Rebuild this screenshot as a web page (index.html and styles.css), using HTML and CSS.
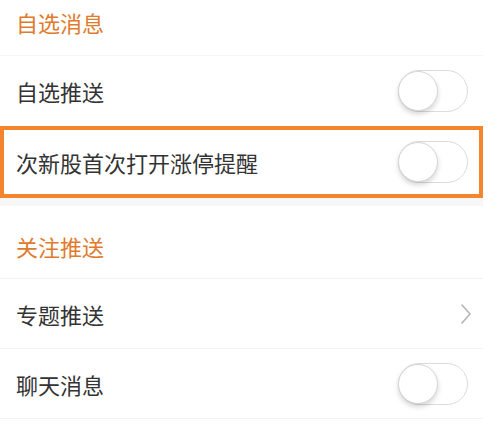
FILE: index.html
```html
<!DOCTYPE html>
<html lang="zh-CN">
<head>
<meta charset="utf-8">
<link rel="stylesheet" href="styles.css">
</head>
<body>
<div class="page">
  <div class="sec-head sec-head-first">自选消息</div>
  <div class="row">
    <span class="label">自选推送</span>
    <span class="toggle"><span class="knob"></span></span>
  </div>
  <div class="row row-boxed">
    <span class="label">次新股首次打开涨停提醒</span>
    <span class="toggle"><span class="knob"></span></span>
  </div>
  <div class="gap"></div>
  <div class="sec-head sec-head-second">关注推送</div>
  <div class="row row-line">
    <span class="label">专题推送</span>
    <svg class="chev" width="12" height="22" viewBox="0 0 12 22"><path d="M2 2 L10 11 L2 20" fill="none" stroke="#b4b4b4" stroke-width="1.6" stroke-linecap="round" stroke-linejoin="round"/></svg>
  </div>
  <div class="row row-line row-last">
    <span class="label">聊天消息</span>
    <span class="toggle"><span class="knob"></span></span>
  </div>
</div>
</body>
</html>
```

FILE: styles.css
```css
html, body {
  margin: 0;
  padding: 0;
  background: #ffffff;
}
body {
  font-family: "Noto Sans CJK SC", "Noto Sans", sans-serif;
  color: #333333;
}
.page {
  width: 483px;
  display: flex;
  flex-direction: column;
}
.sec-head {
  font-size: 22px;
  line-height: 22px;
  color: #e07a2c;
  padding-left: 16px;
  box-sizing: border-box;
  background: #ffffff;
}
.sec-head-first {
  height: 56px;
  padding-top: 11px;
  border-bottom: 1px solid #f5f5f5;
}
.sec-head-second {
  height: 73px;
  padding-top: 29px;
  border-bottom: 1px solid #f2f2f2;
}
.row {
  display: flex;
  align-items: center;
  justify-content: space-between;
  height: 70px;
  padding: 0 15px 0 16px;
  box-sizing: border-box;
  background: #ffffff;
}
.row-boxed {
  height: 72px;
  border: 4px solid #f5852d;
  padding: 0 11px 0 12px;
}
.row-line {
  height: 70px;
  border-bottom: 1px solid #f3f3f3;
}
.row-line .chev {
  margin-right: -4px;
}
.label {
  font-size: 22px;
  line-height: 22px;
  color: #333333;
}
.gap {
  height: 8px;
  background: #f7f7f7;
}
.toggle {
  width: 70px;
  height: 42px;
  box-sizing: border-box;
  border: 1.5px solid #dcdcdc;
  border-radius: 21px;
  background: #ffffff;
  display: flex;
  align-items: center;
}
.knob {
  width: 40px;
  height: 40px;
  margin-left: -1px;
  box-sizing: border-box;
  border-radius: 50%;
  background: #ffffff;
  border: 1px solid #d6d6d6;
  box-shadow: 0 3px 5px rgba(0, 0, 0, 0.16);
}
```
